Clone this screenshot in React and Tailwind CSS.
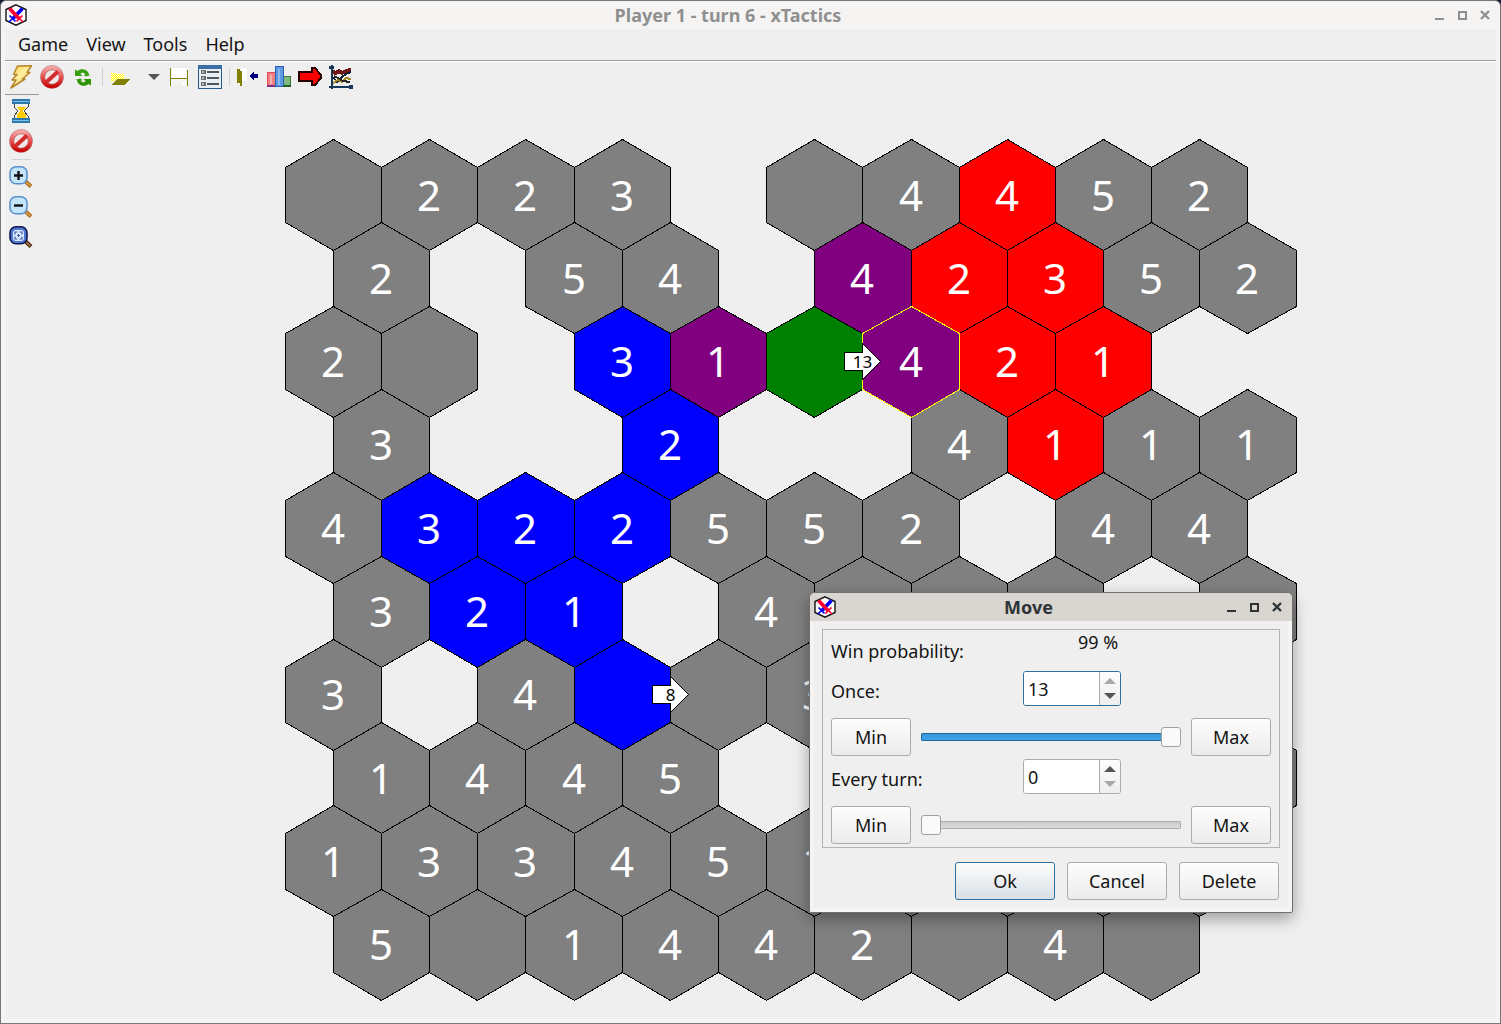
import React, { useState } from "react";

const COLORS = { g: "#808080", r: "#ff0000", b: "#0000ff", p: "#800080", n: "#008000" };

// One string per row; "." is an empty cell, otherwise colour letter + optional number.
const ROWS = [
  "g g2 g2 g3 . g g4 r4 g5 g2",
  "g2 . g5 g4 . p4 r2 r3 g5 g2",
  "g2 g . b3 p1 n p4 r2 r1 .",
  "g3 . . b2 . . g4 r1 g1 g1",
  "g4 b3 b2 b2 g5 g5 g2 . g4 g4",
  "g3 b2 b1 . g4 g g g . g",
  "g3 . g4 b g g3 g g g g",
  "g1 g4 g4 g5 . g g g g g",
  "g1 g3 g3 g4 g5 g1 g g g g",
  "g5 g g1 g4 g4 g2 g g4 g .",
];

const PITCH_X = 96.27;
const PITCH_Y = 83.3;
const px = (v) => Math.floor(v + 0.27) + 0.5;
const py = (v) => Math.round(v) + 0.5;

function hexPoints(col, row) {
  const x = col * PITCH_X + (row % 2 ? PITCH_X / 2 : 0);
  const y = row * PITCH_Y;
  const l = px(x);
  const m = px(x + PITCH_X / 2);
  const r = px(x + PITCH_X);
  return {
    cx: m,
    y,
    points: `${m},${py(y)} ${r},${py(y + 27.7)} ${r},${py(y + PITCH_Y)} ${m},${py(y + 111)} ${l},${py(y + PITCH_Y)} ${l},${py(y + 27.7)}`,
  };
}

function MoveArrow({ x, y, label }) {
  return (
    <g>
      <path
        d={`M${x} ${y - 9}h18v-9l18 18l-18 18v-9h-18z`}
        fill="#fff"
        stroke="#000"
        shapeRendering="crispEdges"
      />
      <text x={x + 18} y={y + 6} textAnchor="middle" fontSize="17" fill="#000">
        {label}
      </text>
    </g>
  );
}

function Board() {
  const cells = ROWS.flatMap((line, row) =>
    line.split(" ").map((c, col) => ({ c, row, col, ...hexPoints(col, row) }))
  ).filter((h) => h.c !== ".");
  const selected = hexPoints(6, 2);
  return (
    <svg width="1013" height="862" viewBox="0 0 1013 862" className="shrink-0" role="img" aria-label="Game board">
      <g shapeRendering="crispEdges" stroke="#000">
        {cells.map((h) => (
          <polygon key={`${h.row}-${h.col}`} points={h.points} fill={COLORS[h.c[0]]} />
        ))}
        <polygon points={selected.points} fill="none" stroke="#ffff00" />
      </g>
      <g fill="#fff" fontSize="42" textAnchor="middle">
        {cells
          .filter((h) => h.c.length > 1)
          .map((h) => (
            <text key={`${h.row}-${h.col}`} x={Math.floor(h.cx)} y={Math.floor(h.y) + 72}>
              {h.c[1]}
            </text>
          ))}
      </g>
      <MoveArrow x={559.5} y={222.5} label="13" />
      <MoveArrow x={367.5} y={555.5} label="8" />
    </svg>
  );
}

function AppIcon() {
  return (
    <svg width="22" height="22" viewBox="0 0 22 22" className="shrink-0" aria-hidden="true">
      <path d="M11 .8L21 5.500V16.500L11 21.200L1 16.500V5.500z" fill="#fff" stroke="#111" strokeWidth="1.400" />
      <path d="M17.500 4.500L8 14.500" stroke="#0000ff" strokeWidth="3.600" />
      <path d="M4.500 11.500l6 6M7.500 14.500l-3.500 3.500" stroke="#0000ff" strokeWidth="1.700" />
      <path d="M4.500 4.500L14 14.500" stroke="#ff0030" strokeWidth="3.800" />
      <path d="M17.500 11.500l-6 6M14.500 14.500l3.500 3.500" stroke="#ff0030" strokeWidth="1.700" />
    </svg>
  );
}

function Icon({ children, crisp, size = 24 }) {
  return (
    <svg
      width={size}
      height={size}
      viewBox="0 0 24 24"
      fill="none"
      shapeRendering={crisp ? "crispEdges" : "auto"}
      aria-hidden="true"
    >
      {children}
    </svg>
  );
}

const Bolt = () => (
  <Icon>
    <defs>
      <linearGradient id="bolt" x1="0" y1="0" x2="1" y2="1">
        <stop offset="0" stopColor="#f9c74a" />
        <stop offset=".45" stopColor="#fff0a0" />
        <stop offset="1" stopColor="#f0b030" />
      </linearGradient>
    </defs>
    <path d="M8.500 1L22.500 .8L18 7.500H21L13.500 14H16L2 23L7 15H3L8 9.500H4.500z" fill="url(#bolt)" stroke="#b8862c" strokeWidth="1.500" strokeLinejoin="round" />
  </Icon>
);

const Forbid = () => (
  <Icon>
    <defs>
      <linearGradient id="forbid" x1="0" y1="0" x2="0" y2="1">
        <stop offset="0" stopColor="#f4a4a4" />
        <stop offset=".5" stopColor="#e65050" />
        <stop offset="1" stopColor="#c80808" />
      </linearGradient>
    </defs>
    <circle cx="12" cy="12" r="9.300" fill="#f0e8e8" stroke="#b87878" strokeWidth="5" />
    <circle cx="12" cy="12" r="9.300" stroke="url(#forbid)" strokeWidth="3.800" />
    <path d="M6 17.500L18 6.500" stroke="#d42c2c" strokeWidth="4" />
  </Icon>
);

const Refresh = () => (
  <Icon>
    <path d="M4 4.500L6.500 6C9 3.500 14 3.500 16.500 6.500C17.500 7.500 18 9 18 10H20L14.500 11.500L12.500 9.500H14.500C13 7 10.500 7.500 9.500 9L11.500 11H4z" fill="#38a010" />
    <path d="M20 20.500L17.500 19C15 21.500 10 21.500 7.500 18.500C6.500 17.500 6 16 6 15H4L9.500 13.500L11.500 15.500H9.500C11 18 13.500 17.500 14.500 16L12.500 14H20z" fill="#2f9408" />
  </Icon>
);

const DITHER = Array.from({ length: 9 }, (_, row) =>
  Array.from({ length: row < 1 ? 6 : row < 6 ? 13 : 6 - (row - 6) * 2 }, (_, col) => [col + 1, row + 8])
).flat();

const OpenFolder = () => (
  <Icon crisp>
    {DITHER.map(([x, y]) => (
      <rect key={`${x}-${y}`} x={x} y={y} width="1" height="1" fill={(x + y) % 2 ? "#ffff00" : "#ffffd0"} />
    ))}
    <path d="M7 14H20L15 20H2z" fill="#808000" />
  </Icon>
);

const Save = () => (
  <Icon crisp>
    <path d="M4 3H20V20H4z" fill="#f4f4f0" />
    <path d="M5 3H19V13H5z" fill="#fff" />
    <path d="M3 3H4V21H3zM20 5H21V21H20zM4 13H20V14H4z" fill="#808000" />
    <path d="M15 17H18V20H15z" fill="#fff" />
  </Icon>
);

const ListIcon = () => (
  <Icon crisp>
    <path d="M.5 .5H23.500V23.500H.5z" fill="#e9eef4" stroke="#285888" />
    <path d="M0 0H24V4H0z" fill="#3a6ea5" />
    {[7, 13, 19].map((y) => (
      <g key={y}>
        <rect x="3" y={y - 2} width="5" height="4" fill="#6c6c6c" />
        <rect x="4" y={y - 1} width="2" height="2" fill="#b8b8b8" />
        <path d={`M9 ${y - 1}H21V${y + 1}H9z`} fill="#505558" />
      </g>
    ))}
  </Icon>
);

const Exit = () => (
  <Icon crisp>
    <path d="M5 3H11V16H5z" fill="#fff" />
    <path d="M1 4H4V6H6V21H4V18H1z" fill="#808000" />
    <path d="M13 11L18 6V9H22V13H18V16z" fill="#000080" />
  </Icon>
);

const Bars = () => (
  <Icon crisp>
    <path d="M.5 7.500H8.500V21.500H.5z" fill="#f08080" stroke="#e04858" />
    <path d="M16.500 11.500H23.500V21.500H16.500z" fill="#80b880" stroke="#388038" />
    <path d="M8.500 1.500H16.500V21.500H8.500z" fill="#6098e0" stroke="#2860b8" />
    <path d="M11 4H13V20H11z" fill="#90b8f0" />
    <path d="M3 10H5V19H3z" fill="#f8b0b0" />
    <path d="M0 20H8V22H0z" fill="#803080" />
    <path d="M16 20H24V22H16z" fill="#206020" />
  </Icon>
);

const RedArrow = () => (
  <Icon crisp>
    <path d="M1 7H14V3H17L23 10V13L17 20H14V16H1z" fill="#ff0000" stroke="#280000" strokeWidth="2" />
  </Icon>
);

const Graph = () => (
  <Icon crisp>
    <path d="M2.500 0V24M0 21.500H24" stroke="#183858" strokeWidth="2" />
    <path d="M0 1H5V4H0zM20 20H24V24H20z" fill="#183858" />
    <path d="M4 7L7 8L10 6L13 8L17 6L22 5" stroke="#701818" strokeWidth="4" />
    <path d="M4 12L8 17L13 12L17 9L22 7" stroke="#102030" strokeWidth="2" />
    <path d="M4 18L9 15L13 17L17 13L22 14" stroke="#a88820" strokeWidth="2" />
    <path d="M5 11L9 13L14 16L21 17" stroke="#282828" strokeWidth="2" />
  </Icon>
);

const Hourglass = () => (
  <Icon crisp>
    <path d="M5 4H19V8L15 12L19 17V20H5V17L9 12L5 8z" fill="#f4f4ee" stroke="#444" />
    <path d="M7 8H17L13 12L17 16V20H8V16L11 12z" fill="#ffcc00" />
    <path d="M3 0H21V5H3zM3 19H21V24H3z" fill="#2f78ac" />
    <path d="M4 2H20V3H4zM4 21H20V22H4z" fill="#78c0e8" />
  </Icon>
);

function Magnifier({ dark, children }) {
  return (
    <Icon>
      <path d="M15.500 14.500L22 20.500" stroke={dark ? "#3a2010" : "#a86820"} strokeWidth="4" />
      <path d="M17 16L21.500 20" stroke={dark ? "#a86a38" : "#d89840"} strokeWidth="1.800" />
      <rect x="1" y="0.8" width="17" height="17" rx="6" fill={dark ? "#5078d0" : "#c4e4fa"} stroke={dark ? "#101850" : "#5a90cc"} strokeWidth="1.600" />
      {children}
    </Icon>
  );
}

function ToolButton({ label, children }) {
  return (
    <button type="button" aria-label={label} title={label} className="flex size-6 items-center justify-center">
      {children}
    </button>
  );
}

const VSep = () => <div className="h-[18px] w-px bg-[#d0d0d0]" />;

function TitleBar({ as: Heading, title, className }) {
  return (
    <header className={`flex h-7 items-center ${className}`}>
      <AppIcon />
      <Heading className="grow pr-1 text-center font-bold">{title}</Heading>
      <div className="flex items-center gap-[11px]">
        <button type="button" aria-label="Minimize">
          <svg width="12" height="12" shapeRendering="crispEdges" fill="currentColor"><path d="M2 9h9v2H2z" /></svg>
        </button>
        <button type="button" aria-label="Maximize">
          <svg width="12" height="12" shapeRendering="crispEdges" fill="none" stroke="currentColor" strokeWidth="2"><path d="M3 3h7v7H3z" /></svg>
        </button>
        <button type="button" aria-label="Close">
          <svg width="12" height="12" fill="none" stroke="currentColor" strokeWidth="2.400"><path d="M2 2l8 8M10 2l-8 8" /></svg>
        </button>
      </div>
    </header>
  );
}

function PushButton({ children, className = "w-20", primary }) {
  return (
    <button
      type="button"
      className={`h-[38px] rounded-[3px] border bg-linear-to-b pb-px ${className} ${
        primary ? "border-[#2a6f9f] from-[#fdfdfd] to-[#d8e0e6]" : "border-[#acacac] from-[#fdfdfd] to-[#ebebeb]"
      }`}
    >
      {children}
    </button>
  );
}

function SpinBox({ id, value, onChange, max, focused }) {
  const border = focused ? "border-[#2a6f9f]" : "border-[#acacac]";
  const arrow = (enabled) => (enabled ? "fill-[#555]" : "fill-[#a8a8a8]");
  return (
    <div className={`flex h-[35px] w-[98px] overflow-hidden rounded-[3px] border bg-white ${border}`}>
      <input
        id={id}
        value={value}
        onChange={(e) => onChange(Math.max(0, Math.min(max, Number(e.target.value) || 0)))}
        className="w-0 min-w-0 grow bg-white pl-1 outline-none"
      />
      <div className="flex w-[21px] flex-col justify-center border-l border-[#acacac] bg-linear-to-b from-[#fcfcfc] to-[#eee]">
        <button type="button" aria-label="Increase" className="flex h-[15px] items-center justify-center" onClick={() => onChange(Math.min(max, value + 1))}>
          <svg width="12" height="6" className={arrow(value < max)}><path d="M0 6L6 0L12 6z" /></svg>
        </button>
        <button type="button" aria-label="Decrease" className="flex h-[15px] items-center justify-center" onClick={() => onChange(Math.max(0, value - 1))}>
          <svg width="12" height="6" className={arrow(value > 0)}><path d="M0 0L6 6L12 0z" /></svg>
        </button>
      </div>
    </div>
  );
}

function Slider({ label, value, onChange, max }) {
  return (
    <input
      type="range"
      aria-label={label}
      min="0"
      max={max}
      value={value}
      onChange={(e) => onChange(Number(e.target.value))}
      className={`m-0 h-2 min-w-0 grow appearance-none rounded-[2px] [&::-webkit-slider-thumb]:size-5 [&::-webkit-slider-thumb]:appearance-none [&::-webkit-slider-thumb]:rounded-[3px] [&::-webkit-slider-thumb]:border [&::-webkit-slider-thumb]:border-[#a0a0a0] [&::-webkit-slider-thumb]:bg-[#fafafa] ${
        value > 0
          ? "bg-linear-to-b from-[#3492d4] to-[#40a8ec] shadow-[inset_0_0_0_1px_#20689c]"
          : "bg-linear-to-b from-[#c8c8c8] to-[#e0e0e0] shadow-[inset_0_0_0_1px_#acacac]"
      }`}
    />
  );
}

function MoveDialog() {
  const max = 13;
  const [once, setOnce] = useState(13);
  const [every, setEvery] = useState(0);
  return (
    <section
      role="dialog"
      aria-label="Move"
      className="absolute top-[591px] left-[808px] w-[484px] rounded-t-[6px] rounded-b-[2px] border border-[#707070] bg-[#f5f4f3] shadow-[0_6px_16px_rgba(0,0,0,0.35)]"
    >
      <TitleBar as="h2" title="Move" className="rounded-t-[5px] bg-[#d9d5d1] pr-[9px] pl-1 text-[#2e3436]" />
      <div className="mx-1 mb-1 bg-[#efefef] p-2">
        <div className="flex flex-col border border-[#b4b4b4] px-2 pb-[3px]">
          <div className="flex h-[41px] items-start">
            <span className="w-[247px] pt-[9px]">Win probability:</span>
            <output>99 %</output>
          </div>
          <div className="flex h-[35px] items-start">
            <label htmlFor="once" className="w-48 pt-2">Once:</label>
            <SpinBox id="once" value={once} onChange={setOnce} max={max} focused />
          </div>
          <div className="mt-3 flex items-center gap-[10px]">
            <PushButton>Min</PushButton>
            <Slider label="Once" value={once} onChange={setOnce} max={max} />
            <PushButton>Max</PushButton>
          </div>
          <div className="mt-[3px] flex h-[35px] items-start">
            <label htmlFor="every" className="w-48 pt-2">Every turn:</label>
            <SpinBox id="every" value={every} onChange={setEvery} max={max} />
          </div>
          <div className="mt-3 flex items-center gap-[10px]">
            <PushButton>Min</PushButton>
            <Slider label="Every turn" value={every} onChange={setEvery} max={max} />
            <PushButton>Max</PushButton>
          </div>
        </div>
        <div className="mt-[14px] flex justify-end gap-3 pr-px">
          <PushButton className="w-[100px]" primary>Ok</PushButton>
          <PushButton className="w-[100px]">Cancel</PushButton>
          <PushButton className="w-[100px]">Delete</PushButton>
        </div>
      </div>
    </section>
  );
}

export default function App() {
  return (
    <div className="min-h-screen bg-[#101838] font-['Noto_Sans',sans-serif] text-[18px] leading-6 text-[#141414]">
      <div className="relative flex min-h-screen flex-col rounded-t-[6px] border border-[#777] bg-[#f5f4f3] px-1 pb-1">
        <TitleBar as="h1" title="Player 1 - turn 6 - xTactics" className="pr-[5px] text-[#8f8f8f]" />
        <div className="flex grow flex-col bg-[#efefef]">
          <nav className="flex h-[31px] items-center gap-[18px] pb-0.5 pl-[13px]">
            <button type="button">Game</button>
            <button type="button">View</button>
            <button type="button">Tools</button>
            <button type="button">Help</button>
          </nav>
          <div className="h-0.5 border-t border-[#999] bg-white" />
          <div className="flex h-8 items-center gap-[7px] pb-0.5 pl-1">
            <ToolButton label="End turn"><Bolt /></ToolButton>
            <ToolButton label="Cancel"><Forbid /></ToolButton>
            <ToolButton label="Refresh"><Refresh /></ToolButton>
            <VSep />
            <ToolButton label="Open"><OpenFolder /></ToolButton>
            <button type="button" aria-label="Recent games" className="ml-[7px] flex w-3 justify-center">
              <svg width="12" height="6" fill="#555"><path d="M0 0L6 6L12 0z" /></svg>
            </button>
            <ToolButton label="Save"><Save /></ToolButton>
            <ToolButton label="List"><ListIcon /></ToolButton>
            <div className="flex items-center gap-[6px]">
              <VSep />
              <ToolButton label="Leave"><Exit /></ToolButton>
            </div>
            <ToolButton label="Statistics"><Bars /></ToolButton>
            <ToolButton label="Move"><RedArrow /></ToolButton>
            <ToolButton label="Graph"><Graph /></ToolButton>
          </div>
          <div className="flex grow">
            <aside className="flex w-[34px] shrink-0 flex-col items-center gap-[6px] self-start border-t border-[#999] pt-1 pr-0.5">
              <ToolButton label="Wait"><Hourglass /></ToolButton>
              <ToolButton label="Stop"><Forbid /></ToolButton>
              <div className="h-px w-[19px] bg-[#d0d0d0]" />
              <ToolButton label="Zoom in">
                <Magnifier><path d="M9.500 5v9M5 9.500h9" stroke="#111" strokeWidth="2.400" /></Magnifier>
              </ToolButton>
              <ToolButton label="Zoom out">
                <Magnifier><path d="M5 9.500h9" stroke="#111" strokeWidth="2.400" /></Magnifier>
              </ToolButton>
              <ToolButton label="Zoom to fit">
                <Magnifier dark>
                  <rect x="4" y="4" width="11" height="11" rx="3" fill="#dce8fc" />
                  <path d="M6 8.500V6h2.500M10.500 6H13v2.500M13 10.500V13h-2.500M8.500 13H6v-2.500" stroke="#3858b0" strokeWidth="1.200" />
                  <path d="M8 9.500h3M9.500 8v3" stroke="#3858b0" />
                </Magnifier>
              </ToolButton>
            </aside>
            <main className="flex grow items-start justify-center pt-[45px] pl-12">
              <Board />
            </main>
          </div>
        </div>
        <MoveDialog />
      </div>
    </div>
  );
}
